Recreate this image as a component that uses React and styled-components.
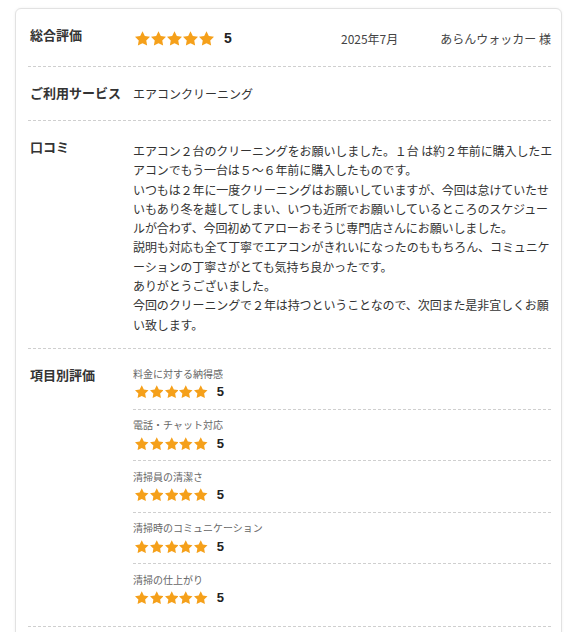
import React from "react";
import styled, { createGlobalStyle } from "styled-components";

const Global = createGlobalStyle`
  html, body { margin: 0; padding: 0; background: #fff; }
  body {
    font-family: "Noto Sans CJK JP", "Noto Sans", sans-serif;
    color: #333;
  }
`;

const Card = styled.div`
  box-sizing: border-box;
  width: 547px;
  margin: 8px 0 0 15px;
  padding: 0 10px 20px 12px;
  border: 1px solid #e2e2e2;
  border-radius: 6px;
  box-shadow: 0 0 3px rgba(0, 0, 0, 0.06);
  background: #fff;
`;

const Row = styled.div`
  display: grid;
  grid-template-columns: 105px 1fr;
  padding: 17px 0 ${(p) => p.$pb}px;
  border-bottom: 1px dashed #cfcfcf;
`;

const Label = styled.div`
  padding-left: 2px;
  font-size: 13px;
  font-weight: 700;
  line-height: 18px;
  color: #333;
  white-space: nowrap;
`;

const Content = styled.div`
  margin-top: ${(p) => p.$mt || 0}px;
  min-width: 0;
`;

const HeaderLine = styled.div`
  display: flex;
  align-items: center;
  height: 20px;
`;

const Stars = styled.div`
  display: flex;
  align-items: center;
  gap: ${(p) => p.$gap}px;
  padding-left: 2px;
`;

const Score = styled.span`
  margin-left: ${(p) => p.$ml}px;
  font-family: "Liberation Sans", "Noto Sans", sans-serif;
  font-weight: 700;
  font-size: ${(p) => p.$size}px;
  color: #222;
  line-height: 1;
`;

const Meta = styled.span`
  font-size: 12px;
  color: #444;
  margin-left: ${(p) => p.$ml};
  white-space: nowrap;
`;

const Plain = styled.div`
  font-size: 12px;
  line-height: 19px;
  color: #333;
`;

const Comment = styled.div`
  font-size: 12px;
  letter-spacing: -0.1px;
  line-height: 19.3px;
  color: #333;
  white-space: pre;
`;

const SubItem = styled.div`
  padding: 8.5px 0 8px;
  border-bottom: 1px dashed #cfcfcf;
  &:first-child { padding-top: 0; }
  &:last-child { padding-bottom: 0; border-bottom: none; }
`;

const SubLabel = styled.div`
  font-size: 10px;
  line-height: 14px;
  color: #666;
  margin-bottom: 2px;
`;

const SubStars = styled.div`
  display: flex;
  align-items: center;
  height: 18px;
`;

const Star = ({ size }) => (
  <svg width={size} height={size} viewBox="2 1.6 20 20" aria-hidden="true">
    <polygon
      points="12,2 15.09,8.26 22,9.27 17,14.14 18.18,21.02 12,17.77 5.82,21.02 7,14.14 2,9.27 8.91,8.26"
      fill="#f5a01a"
    />
  </svg>
);

const StarSet = ({ size, gap }) => (
  <Stars $gap={gap}>
    {[0, 1, 2, 3, 4].map((i) => (
      <Star key={i} size={size} />
    ))}
  </Stars>
);

const commentLines = [
  "エアコン２台のクリーニングをお願いしました。１台 は約２年前に購入したエ",
  "アコンでもう一台は５～６年前に購入したものです。",
  "いつもは２年に一度クリーニングはお願いしていますが、今回は怠けていたせ",
  "いもあり冬を越してしまい、いつも近所でお願いしているところのスケジュー",
  "ルが合わず、今回初めてアローおそうじ専門店さんにお願いしました。",
  "説明も対応も全て丁寧でエアコンがきれいになったのももちろん、コミュニケ",
  "ーションの丁寧さがとても気持ち良かったです。",
  "ありがとうございました。",
  "今回のクリーニングで２年は持つということなので、次回また是非宜しくお願",
  "い致します。",
];

const items = [
  "料金に対する納得感",
  "電話・チャット対応",
  "清掃員の清潔さ",
  "清掃時のコミュニケーション",
  "清掃の仕上がり",
];

export default function App() {
  return (
    <>
      <Global />
      <Card>
        <Row $pb={18}>
          <Label>総合評価</Label>
          <Content $mt={2}>
            <HeaderLine>
              <StarSet size={15} gap={1} />
              <Score $ml={10} $size={14}>5</Score>
              <Meta $ml="auto">2025年7月</Meta>
              <Meta $ml="42px">あらんウォッカー 様</Meta>
            </HeaderLine>
          </Content>
        </Row>
        <Row $pb={17}>
          <Label>ご利用サービス</Label>
          <Content>
            <Plain>エアコンクリーニング</Plain>
          </Content>
        </Row>
        <Row $pb={14}>
          <Label>口コミ</Label>
          <Content $mt={3}>
            <Comment>{commentLines.join("\n")}</Comment>
          </Content>
        </Row>
        <Row $pb={19}>
          <Label>項目別評価</Label>
          <Content $mt={1}>
            {items.map((name) => (
              <SubItem key={name}>
                <SubLabel>{name}</SubLabel>
                <SubStars>
                  <StarSet size={13.5} gap={1.3} />
                  <Score $ml={9} $size={13}>5</Score>
                </SubStars>
              </SubItem>
            ))}
          </Content>
        </Row>
      </Card>
    </>
  );
}
